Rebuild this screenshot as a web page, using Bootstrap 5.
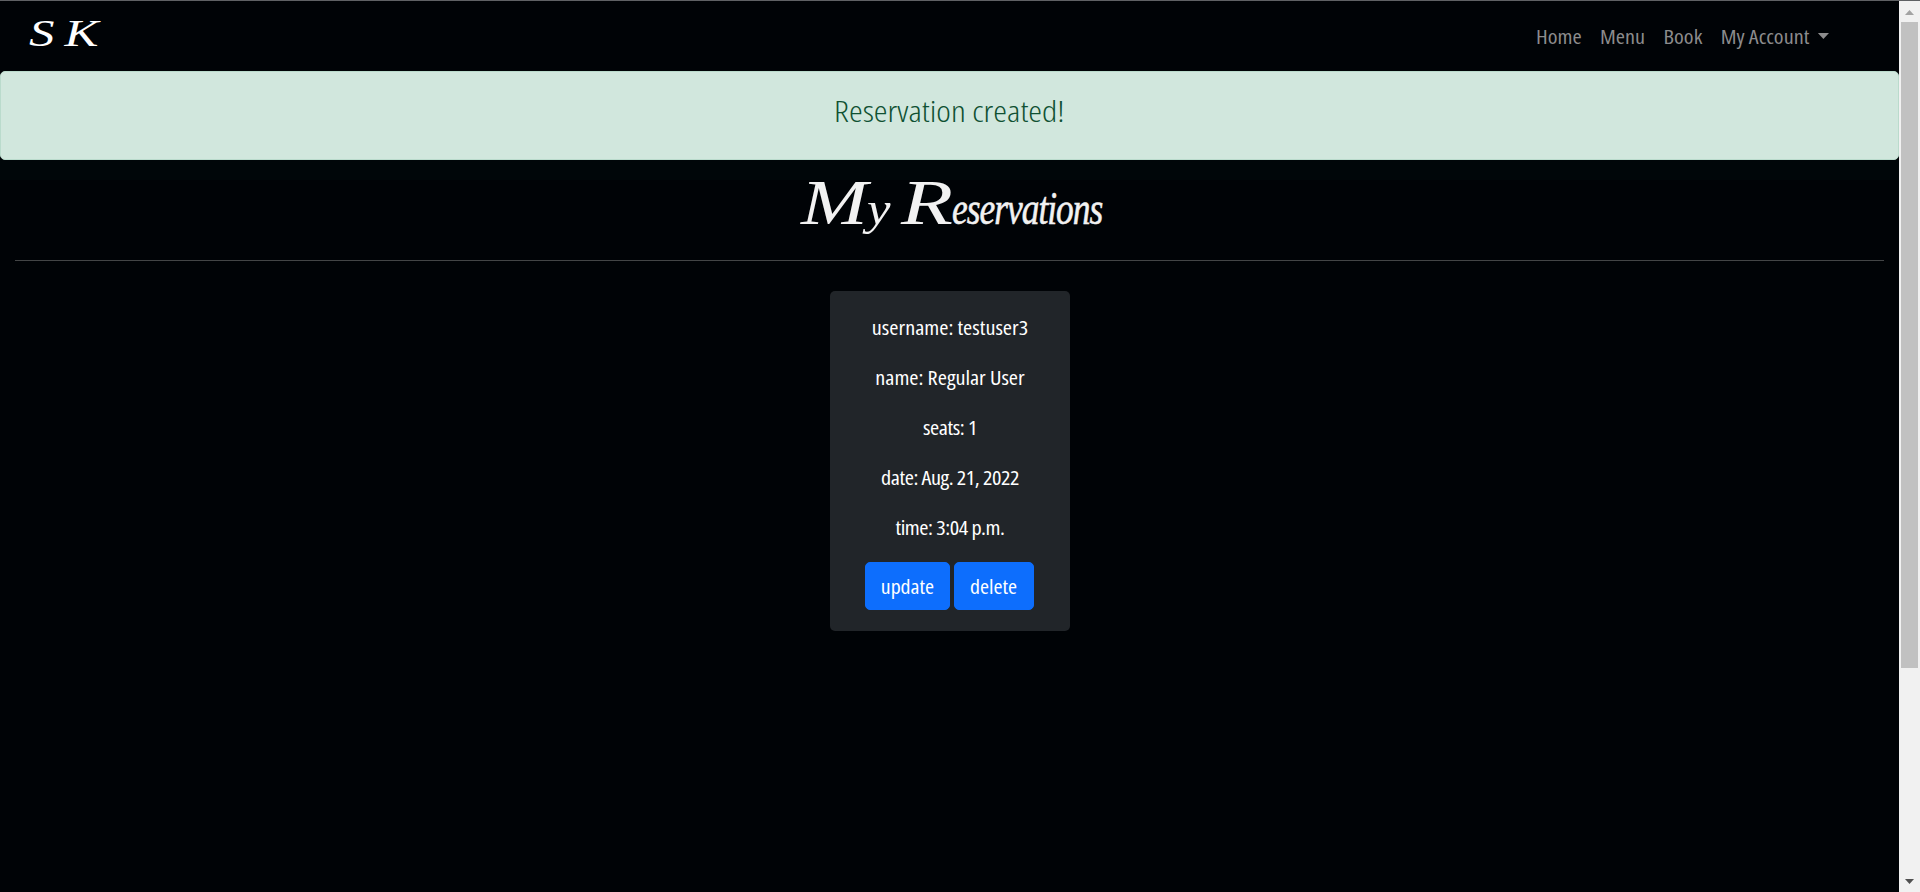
<!DOCTYPE html>
<html lang="en">
<head>
<meta charset="utf-8">
<meta name="viewport" content="width=device-width, initial-scale=1">
<title>My Reservations</title>
<link href="https://cdn.jsdelivr.net/npm/bootstrap@5.3.0/dist/css/bootstrap.min.css" rel="stylesheet">
<style>
body{height:892px;overflow:hidden;background:#000306;border-top:1px solid #5f6164;font:400 20px/30px "Open Sans",sans-serif;font-stretch:75%;color:#fff}
.page{min-width:0;background:#000306}
.topbar{height:70px;padding:0 70px 0 29px}
.brand{font:italic 38px/40px "Liberation Serif",serif;letter-spacing:-1px;color:#fff;margin-top:-6px;transform:scaleX(1.34);transform-origin:left}
.topbar .nav-link{color:#8c8c8d;padding:0;line-height:30px}
.topbar .nav-link.dropdown-toggle::after{margin-left:8px;vertical-align:5px;border-width:6px 5.5px 0}
.topbar .navlist{gap:16.7px;margin-top:1px;transform:scaleX(1.11);transform-origin:right}
.notice{height:89px;padding:21px 0 0;border-radius:5px;background:#d1e7dd;border:1px solid #badbcc;color:#0f5132;font-size:30px;line-height:36px;font-weight:300}
.notice span{transform:scaleX(1.16)}
.heading{height:101px;background:linear-gradient(#000609 20px,#000306 20px)}
.heading h1{height:101px;margin:0 15px;font:italic 400 46px/60px "Liberation Serif",serif;letter-spacing:-1.3px;color:#f2f2f2;padding:11px 0 0 3px;border-bottom:1px solid #434546}
.heading span{transform-origin:left;text-align:left;white-space:pre}
.heading .cap{font-size:64px;line-height:1}
.w-m{width:66px;transform:scaleX(1.25)}
.w-y{width:34px;transform:scaleX(1.15)}
.w-r{width:51px;transform:scaleX(1.33)}
.w-rest{width:150px;transform:scaleX(.77);-webkit-text-stroke:.6px #f2f2f2}
.booking{width:240px;height:340px;margin-top:30px;padding-top:22px;background:#212529;border-radius:5px}
.booking p{margin-bottom:20px;transform:scaleX(1.11)}
.booking .digits{letter-spacing:-.4px}
.booking .btn{--bs-btn-bg:#0d6efd;font-size:20px;line-height:30px;height:48px;border-radius:5px;padding:9px 0 7px}
.booking .btn span{transform:scaleX(1.09)}
.actions{gap:4px;margin-top:-1px}
.b1{width:85px}.b2{width:80px}
.scroller{width:21px;background:#f1f1f1}
.scroller .thumb{width:17px;height:646px;background:#c1c1c1;margin-left:2px}
</style>
</head>
<body class="d-flex">
<div class="page flex-grow-1">
  <nav class="topbar d-flex align-items-center justify-content-between">
    <a class="brand text-decoration-none" href="#">S K</a>
    <div class="navlist d-flex">
      <a class="nav-link" href="#">Home</a>
      <a class="nav-link" href="#">Menu</a>
      <a class="nav-link" href="#">Book</a>
      <a class="nav-link dropdown-toggle" href="#">My Account</a>
    </div>
  </nav>
  <div class="notice text-center" role="alert"><span class="d-inline-block">Reservation created!</span></div>
  <header class="heading"><h1 class="d-flex justify-content-center align-items-baseline"><span class="cap w-m">M</span><span class="w-y">y </span><span class="cap w-r">R</span><span class="w-rest">eservations</span></h1></header>
  <section class="booking mx-auto text-center">
    <p>username: testuser3</p>
    <p>name: Regular User</p>
    <p class="digits">seats: 1</p>
    <p class="digits">date: Aug. 21, 2022</p>
    <p class="digits">time: 3:04 p.m.</p>
    <div class="actions d-flex justify-content-center">
      <a class="btn btn-primary b1" href="#"><span class="d-inline-block">update</span></a>
      <a class="btn btn-primary b2" href="#"><span class="d-inline-block">delete</span></a>
    </div>
  </section>
</div>
<div class="scroller d-flex flex-column flex-shrink-0">
  <svg width="21" height="21"><path d="M6 14h9l-4.500-5z" fill="#a3a3a3"/></svg>
  <div class="thumb"></div>
  <svg class="mt-auto" width="21" height="21"><path d="M6 8h9l-4.500 5z" fill="#505050"/></svg>
</div>
<script src="https://cdn.jsdelivr.net/npm/bootstrap@5.3.0/dist/js/bootstrap.bundle.min.js"></script>
</body>
</html>
